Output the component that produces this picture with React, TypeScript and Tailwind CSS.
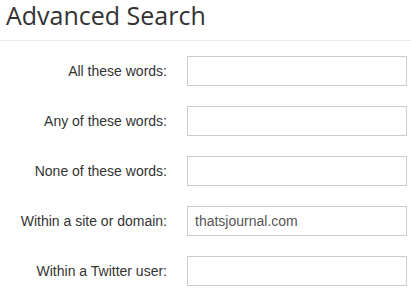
const fields = [
  { label: 'All these words:', value: '' },
  { label: 'Any of these words:', value: '' },
  { label: 'None of these words:', value: '' },
  { label: 'Within a site or domain:', value: 'thatsjournal.com' },
  { label: 'Within a Twitter user:', value: '' },
]

export default function App() {
  return (
    <div className="w-[411px] h-[294px] bg-white overflow-hidden">
      <h1 className="pl-[6px] pb-[10px] border-b border-[#eeeeee] text-[25px] leading-[30px] font-normal text-[#333333] font-['Open_Sans',sans-serif]">
        Advanced Search
      </h1>
      <form className="mt-[15px] grid grid-cols-[167px_220px] gap-x-5 gap-y-5 font-['Liberation_Sans',Arial,sans-serif] text-[14px]">
        {fields.map((f) => (
          <div key={f.label} className="contents">
            <label className="self-center text-right text-[#333333]">{f.label}</label>
            <input
              type="text"
              defaultValue={f.value}
              className="h-[30px] w-[220px] border border-[#cccccc] px-[7px] text-[#555555] outline-none"
            />
          </div>
        ))}
      </form>
    </div>
  )
}
